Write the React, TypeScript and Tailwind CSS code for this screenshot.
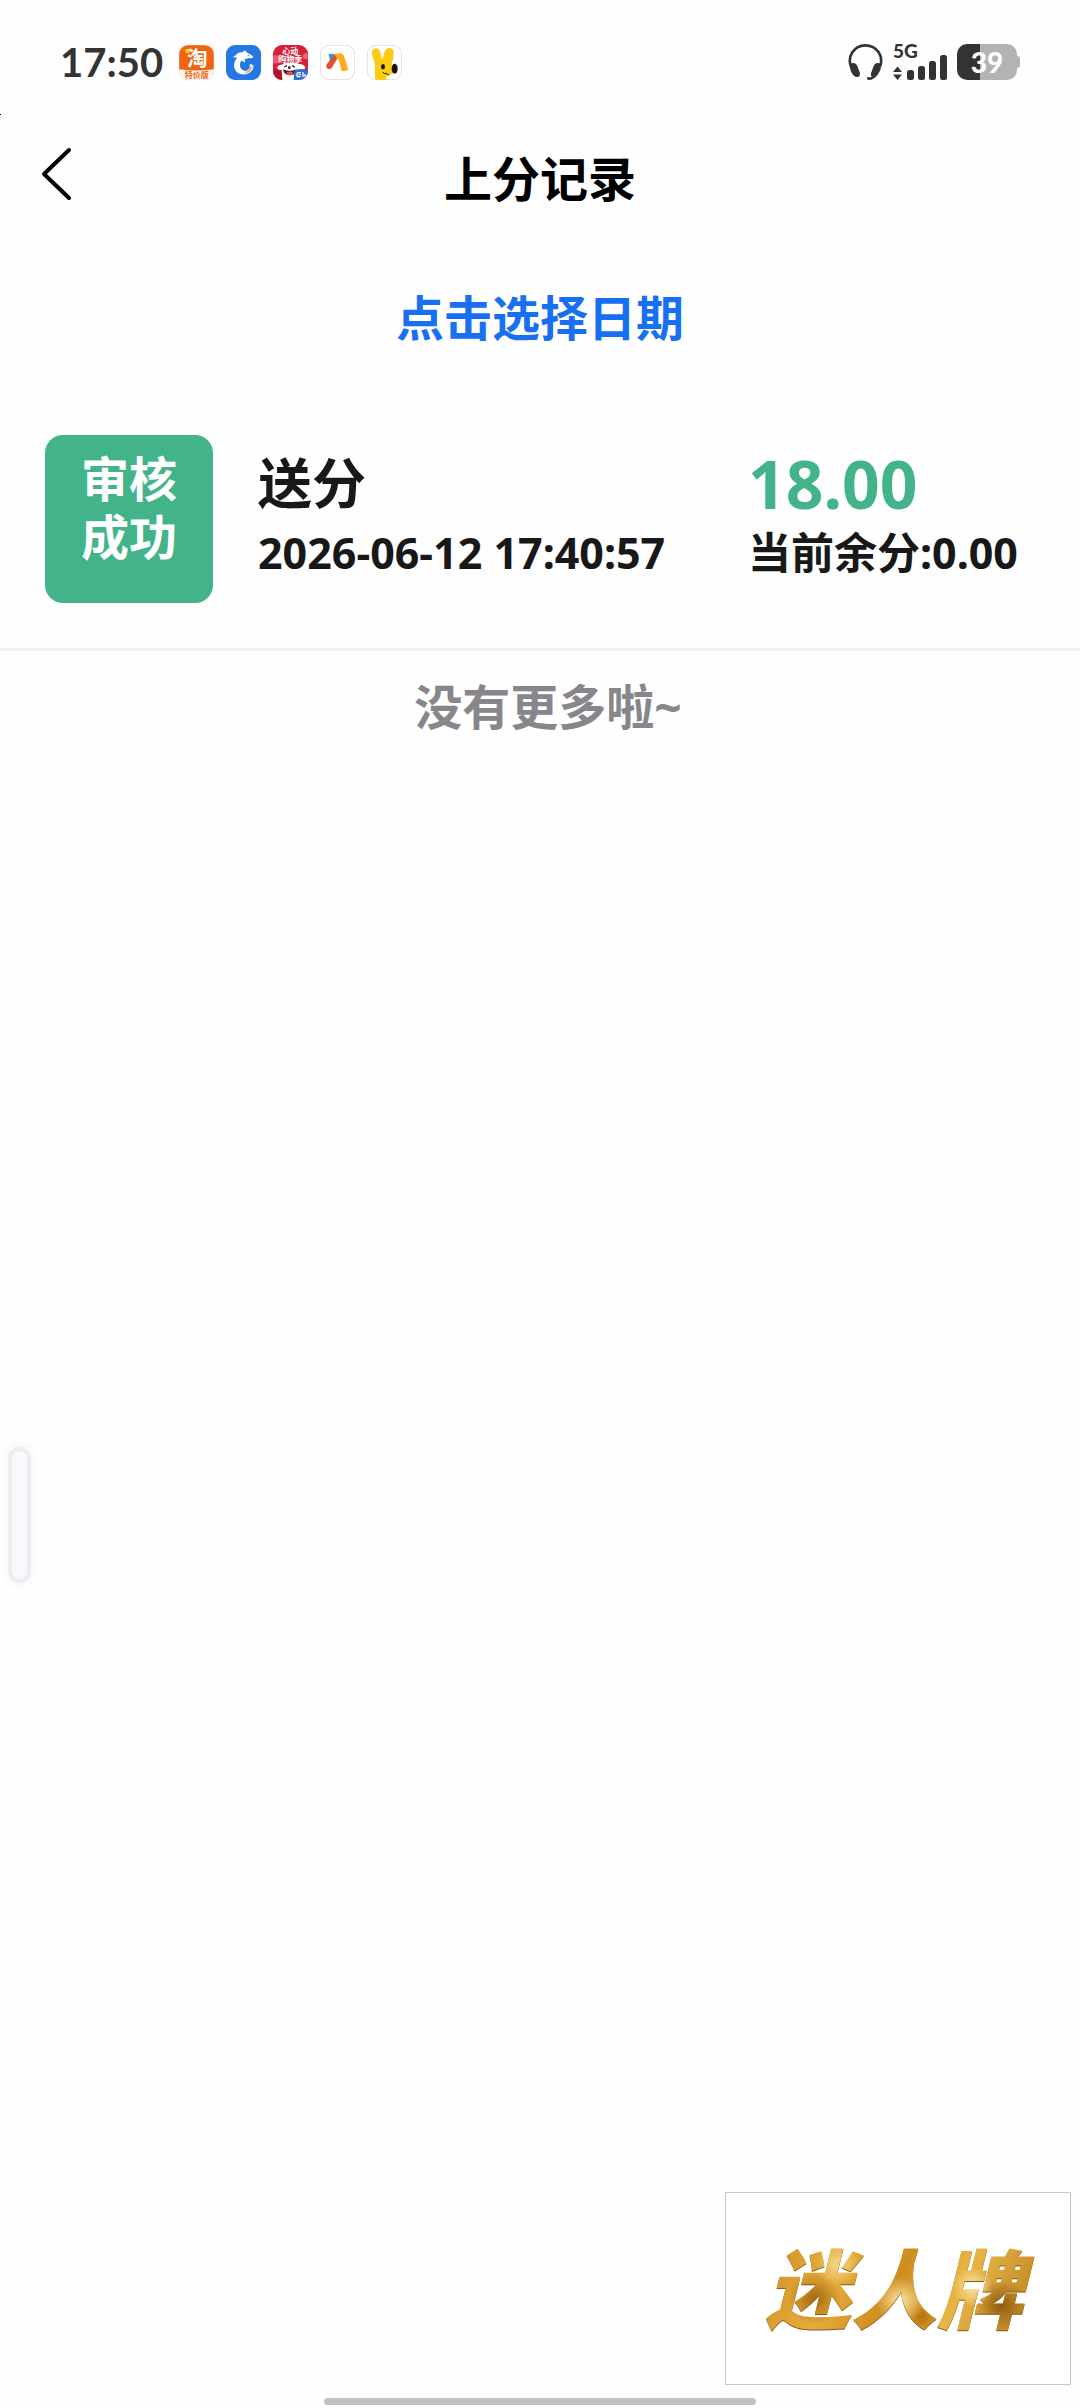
import React from "react";

const CJK = "'Noto Sans CJK SC', sans-serif";

function TaobaoIcon() {
  return (
    <svg viewBox="0 0 105 105" className="size-[35px] overflow-visible" aria-hidden="true">
      <rect width="105" height="105" rx="27" fill="#ee6411" />
      <path d="M0 73 Q52 80 105 73 V78 Q105 105 78 105 H27 Q0 105 0 78Z" fill="#fdf6f0" />
      <circle cx="25" cy="18" r="7" fill="#fdd000" />
      <text x="55" y="63" fontSize="62" fontWeight="700" fill="#fff" textAnchor="middle" fontFamily={CJK}>淘</text>
      <text x="53" y="99" fontSize="24" fontWeight="700" fill="#ee6411" textAnchor="middle" fontFamily={CJK}>特价版</text>
      <rect x="1" y="1" width="103" height="103" rx="26" fill="none" stroke="#e9dcd2" strokeWidth="1" />
    </svg>
  );
}

function DolphinIcon() {
  return (
    <svg viewBox="0 0 105 105" className="size-[35px]" aria-hidden="true">
      <rect width="105" height="105" rx="27" fill="#2577e3" />
      <path
        d="M21 36 Q28 33 32 27 Q38 21 49 22 L57 16 Q60 22 68 26 Q80 30 82 37 Q78 41 69 39 Q62 42 55 42 Q59 46 57 52 Q50 50 47 46 Q41 53 42 63 Q44 75 57 78 Q58 82 50 88 Q36 88 28 76 Q20 62 28 46 Q31 41 34 38 Q27 39 21 36Z"
        fill="#fff"
      />
      <path d="M48 88 Q48 81 56 78 Q69 77 72 64 L69 59 Q76 56 82 61 Q84 79 66 86 Q57 89 48 88Z" fill="#f3ece9" />
      <path d="M60 80 Q71 77 73 65 L77 66 Q76 81 60 84Z" fill="#e39a80" />
      <circle cx="67" cy="32" r="2" fill="#2577e3" />
    </svg>
  );
}

function ShoppingIcon() {
  return (
    <svg viewBox="0 0 105 105" className="size-[35px] overflow-visible" aria-hidden="true">
      <defs>
        <clipPath id="sh">
          <rect width="105" height="105" rx="27" />
        </clipPath>
      </defs>
      <g clipPath="url(#sh)">
        <rect width="105" height="105" fill="#d71f3a" />
        <circle cx="8" cy="43" r="13" fill="#ef5568" />
        <circle cx="98" cy="34" r="9" fill="#f0606a" />
        <path d="M0 80 L22 62 L30 105 H0Z" fill="#b3122c" />
        <path d="M12 70 Q14 58 27 59 Q35 49 53 54 Q70 50 77 57 Q94 56 97 69 Q91 76 81 73 V105 H28 L26 74 Q18 77 12 70Z" fill="#fff" />
        <path d="M30 73 Q50 82 71 73 Q69 91 50 91 Q32 90 30 73Z" fill="#4b1720" />
        <path d="M39 83 Q51 76 62 83 Q57 91 50 91 Q43 90 39 83Z" fill="#ef4b58" />
        <path d="M34 66 l8 -4 M57 62 l9 4" stroke="#34191d" strokeWidth="4" />
        <circle cx="49" cy="68" r="4" fill="#34191d" />
        <path d="M64 81 Q66 74 75 73 H105 V105 H62Z" fill="#2d70cf" />
        <path d="M72 95 V88 Q72 83 77 83 H84 M72 95 H83 M77 89 H84 M90 82 V96 M96 87 V96" stroke="#fff" strokeWidth="4" fill="none" />
      </g>
      <text x="52" y="26" fontSize="24" fontWeight="700" fill="#fff" textAnchor="middle" fontFamily={CJK}>心动</text>
      <text x="52" y="50" fontSize="24" fontWeight="700" fill="#fff" textAnchor="middle" fontFamily={CJK}>购物季</text>
    </svg>
  );
}

function RibbonIcon() {
  return (
    <svg viewBox="0 0 105 105" className="size-[35px]" aria-hidden="true">
      <rect x="1" y="1" width="103" height="103" rx="26" fill="#fff" stroke="#dfdfdf" strokeWidth="3" />
      <path d="M26 27 L41 26 L44 40 L30 50Z" fill="#2c9bd6" />
      <path d="M19 59 L45 27 L56 34 L35 69 Q27 76 20 69Z" fill="#e2502c" />
      <path d="M44 27 L60 25 Q68 24 72 33 L85 76 L65 79 L56 43 L51 41Z" fill="#fbab1b" />
    </svg>
  );
}

function RabbitIcon() {
  return (
    <svg viewBox="0 0 105 105" className="size-[35px]" aria-hidden="true">
      <rect x="1" y="1" width="103" height="103" rx="26" fill="#fff" stroke="#dfdfdf" strokeWidth="3" />
      <path
        d="M15 22 Q16 9 28 10 Q39 11 42 31 L44 42 Q47 42 50 29 Q54 9 67 9 Q81 9 80 26 Q79 42 74 55 Q80 66 77 85 Q70 92 57 95 L58 105 H26 Q23 103 24 70 Q24 50 18 39 Q14 30 15 22Z"
        fill="#fccb14"
      />
      <ellipse cx="48" cy="65" rx="6" ry="8" fill="#17120a" />
      <ellipse cx="83" cy="71" rx="9" ry="15" fill="#17120a" />
      <path d="M48 81 Q52 89 57 85 Q61 91 66 87" stroke="#17120a" strokeWidth="3" fill="none" />
    </svg>
  );
}

function StatusBar() {
  return (
    <div className="flex h-[124px] items-start justify-between px-[60px] pt-[44px] text-[#333]">
      <div className="flex items-center gap-3">
        <time className="mr-1 font-['Lato'] text-[40px] leading-[36px] font-bold">17:50</time>
        <TaobaoIcon />
        <DolphinIcon />
        <ShoppingIcon />
        <RibbonIcon />
        <RabbitIcon />
      </div>
      <div className="flex items-center gap-[10px]">
        <svg viewBox="0 0 105 108" className="h-9 w-[35px]" aria-label="耳机">
          <path d="M8 66 Q1 43 13 25 Q27 4 52 4 Q78 4 92 25 Q104 43 97 66" fill="none" stroke="#333" strokeWidth="8" />
          <path d="M5 64 Q8 56 18 57 Q25 58 28 66 L36 88 Q37 96 30 99 Q21 101 15 92 Q6 82 5 64Z" fill="#333" />
          <path d="M100 64 Q97 56 87 57 Q80 58 77 66 L69 88 Q67 94 71 98 Q66 101 58 99 Q55 107 62 108 Q77 109 90 91 Q99 80 100 64Z" fill="#333" />
        </svg>
        <div className="flex h-9 w-[54px] flex-col justify-between">
          <span className="h-[14px] font-['Lato'] text-[19px] leading-[14px] font-black">5G</span>
          <div className="-mt-2 flex items-end">
            <svg viewBox="0 0 54 26" className="h-[26px] w-[54px]" aria-label="信号" fill="#333">
              <path d="M0 18 L4.500 12.500 L9 18Z M0 20.500 H9 L4.500 26Z" />
              <rect x="14" y="16" width="7" height="10" rx="2.500" />
              <rect x="25" y="12" width="7" height="14" rx="2.500" />
              <rect x="36" y="7" width="7" height="19" rx="2.500" />
              <rect x="47" y="1" width="7" height="25" rx="2.500" />
            </svg>
          </div>
        </div>
        <div className="flex items-center">
          <div className="flex h-9 w-[60px] items-center justify-center rounded-[10px] bg-linear-to-r from-[#333] from-38% to-[#b3b3b3] to-38% font-['Lato'] text-[28px] font-black text-white">
            39
          </div>
          <div className="h-3 w-[3px] rounded-r-sm bg-[#b3b3b3]" />
        </div>
      </div>
    </div>
  );
}

type Entry = { status: string; title: string; time: string; amount: string; balance: string };

const entries: Entry[] = [
  { status: "审核成功", title: "送分", time: "2026-06-12 17:40:57", amount: "18.00", balance: "0.00" },
];

function EntryRow({ status, title, time, amount, balance }: Entry) {
  return (
    <li className="flex items-start border-b-[3px] border-[#edf4f8] py-[45px] pl-[45px] text-[#181818]">
      <div className="size-[168px] shrink-0 rounded-[18px] bg-[#43b48a] px-9 pt-[15px] text-center text-5xl leading-[58px] text-white">
        {status}
      </div>
      <div className="flex-1 pt-[10px] pl-[45px]">
        <p className="text-[54px] leading-[76px]">{title}</p>
        <p className="text-[43px] leading-[64px] whitespace-nowrap">{time}</p>
      </div>
      <div className="w-[332px] shrink-0 pt-[10px]">
        <p className="text-[66px] leading-[76px] text-[#43b48a]">{amount}</p>
        <p className="text-[43px] leading-[64px] whitespace-nowrap">当前余分:{balance}</p>
      </div>
    </li>
  );
}

export default function App() {
  return (
    <div className="relative flex min-h-screen flex-col bg-[#fefefe] font-['Noto_Sans','Noto_Sans_CJK_SC',sans-serif] font-bold">
      <StatusBar />
      <span className="absolute top-[114px] left-0 h-px w-px bg-black" />
      <header className="grid h-[110px] grid-cols-[120px_1fr_120px] items-center">
        <button type="button" aria-label="返回" className="flex pb-[10px] pl-[40px]">
          <svg viewBox="0 0 34 54" className="h-[54px] w-[34px]" fill="none" stroke="#000" strokeWidth="4" strokeLinecap="round" strokeLinejoin="round">
            <path d="M29 3 L4 27 L29 51" />
          </svg>
        </button>
        <h1 className="text-center text-5xl leading-[58px] text-black">上分记录</h1>
      </header>
      <div className="flex h-[156px] items-center justify-center pt-3">
        <button type="button" className="text-5xl leading-[58px] text-[#176ff2]">点击选择日期</button>
      </div>
      <main>
        <ul>
          {entries.map((entry) => (
            <EntryRow key={entry.time} {...entry} />
          ))}
        </ul>
        <p className="pt-[27px] pl-4 text-center text-5xl leading-[58px] text-[#86868b]">没有更多啦~</p>
      </main>
      <div className="fixed top-[1447px] left-2 h-[136px] w-[23px] rounded-full border-4 border-[#eeeeee] bg-[#f8f9ff] shadow-[0_0_4px_4px_#f9f9f9]" />
      <div className="fixed right-[9px] bottom-[23px] flex h-[193px] w-[346px] items-center justify-center border border-[#c8c8c8] bg-white pr-2">
        <span className="bg-[radial-gradient(circle_at_30%_25%,#f3d78c_0px,transparent_22px),radial-gradient(circle_at_22%_60%,#a3690f_0px,transparent_26px),radial-gradient(circle_at_52%_62%,#f8e3a6_0px,transparent_24px),radial-gradient(circle_at_60%_78%,#b8700f_0px,transparent_20px),radial-gradient(circle_at_78%_48%,#fae6a4_0px,transparent_20px),radial-gradient(circle_at_88%_66%,#8f5a12_0px,transparent_26px),linear-gradient(115deg,#c88a1e,#e6ad3c_30%,#cf8d1d_50%,#e8b646_70%,#b87d1c)] bg-clip-text px-3 text-[86px] leading-[100px] font-black text-transparent italic drop-shadow-[0_1px_0_#8a5a14]">
          迷人牌
        </span>
      </div>
      <div className="fixed bottom-[3px] left-1/2 h-[7px] w-2/5 -translate-x-1/2 rounded-full bg-[#c1c1c1]" />
    </div>
  );
}
